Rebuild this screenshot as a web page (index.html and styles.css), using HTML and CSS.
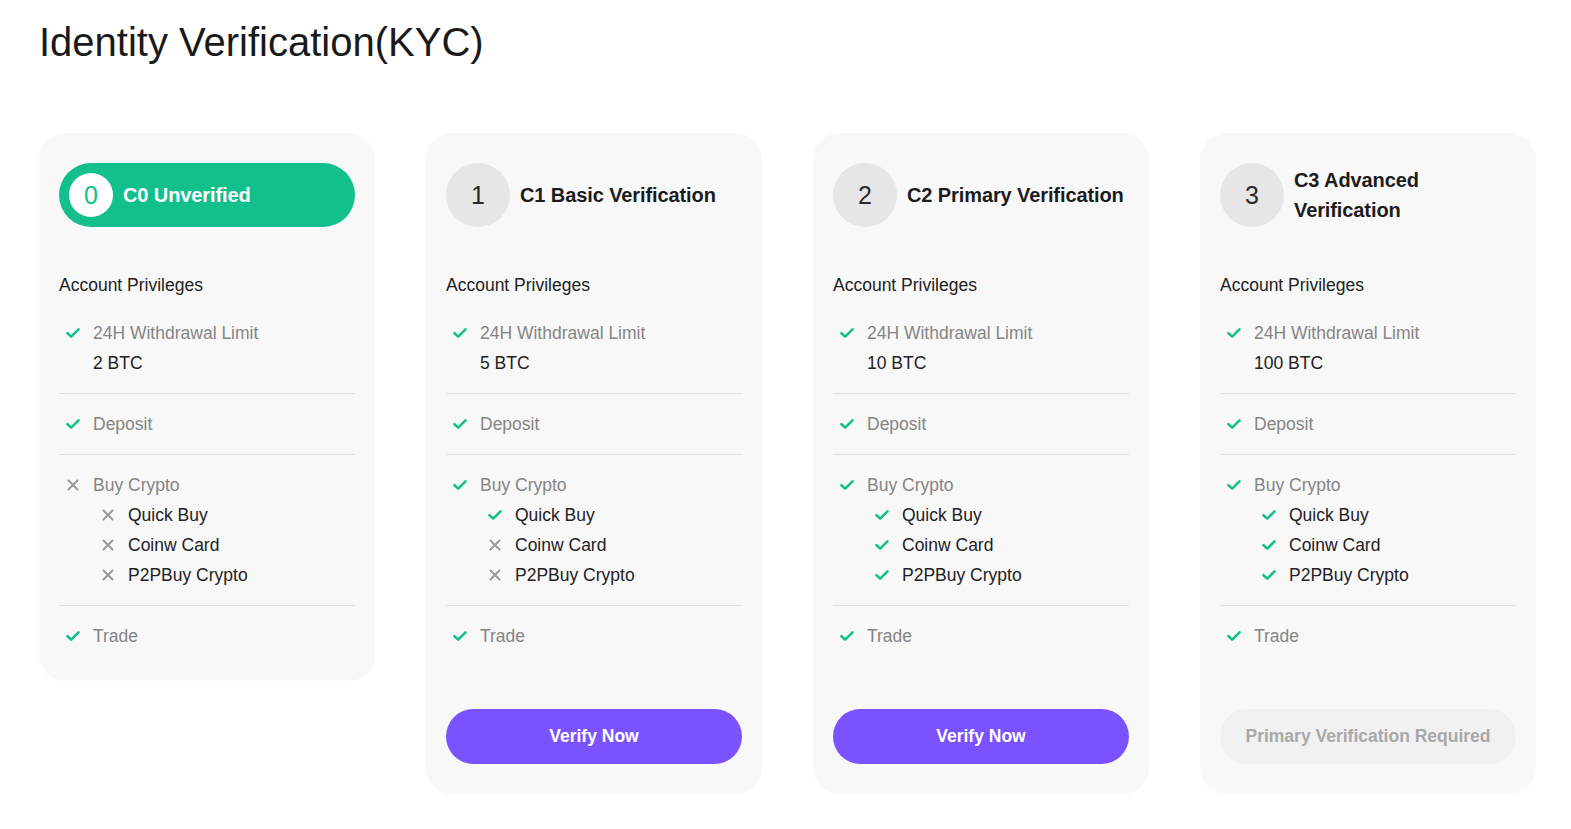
FILE: index.html
```html
<!DOCTYPE html>
<html>
<head>
<meta charset="utf-8">
<title>Identity Verification(KYC)</title>
<link rel="stylesheet" href="styles.css">
</head>
<body>
<div class="page">
  <h1 class="title">Identity Verification(KYC)</h1>
  <div class="cards">
    <!-- C0 -->
    <div class="card">
      <div class="head head-active">
        <div class="num num-active">0</div>
        <div class="head-text">C0 Unverified</div>
      </div>
      <div class="label">Account Privileges</div>
      <div class="sec">
        <div class="row"><span class="ic ok"><svg viewBox="0 0 14 14"><path d="M1.5 7.2 L5.2 10.6 L12.5 3.4"/></svg></span><span class="txt">24H Withdrawal Limit</span></div>
        <div class="row"><span class="ic"></span><span class="val">2 BTC</span></div>
      </div>
      <div class="sec">
        <div class="row"><span class="ic ok"><svg viewBox="0 0 14 14"><path d="M1.5 7.2 L5.2 10.6 L12.5 3.4"/></svg></span><span class="txt">Deposit</span></div>
      </div>
      <div class="sec">
        <div class="row"><span class="ic no"><svg viewBox="0 0 14 14"><path d="M2.5 2.5 L11.5 11.5 M11.5 2.5 L2.5 11.5"/></svg></span><span class="txt">Buy Crypto</span></div>
        <div class="row sub"><span class="ic no"><svg viewBox="0 0 14 14"><path d="M2.5 2.5 L11.5 11.5 M11.5 2.5 L2.5 11.5"/></svg></span><span class="val">Quick Buy</span></div>
        <div class="row sub"><span class="ic no"><svg viewBox="0 0 14 14"><path d="M2.5 2.5 L11.5 11.5 M11.5 2.5 L2.5 11.5"/></svg></span><span class="val">Coinw Card</span></div>
        <div class="row sub"><span class="ic no"><svg viewBox="0 0 14 14"><path d="M2.5 2.5 L11.5 11.5 M11.5 2.5 L2.5 11.5"/></svg></span><span class="val">P2PBuy Crypto</span></div>
      </div>
      <div class="sec last">
        <div class="row"><span class="ic ok"><svg viewBox="0 0 14 14"><path d="M1.5 7.2 L5.2 10.6 L12.5 3.4"/></svg></span><span class="txt">Trade</span></div>
      </div>
    </div>

    <!-- C1 -->
    <div class="card">
      <div class="head">
        <div class="num">1</div>
        <div class="head-text">C1 Basic Verification</div>
      </div>
      <div class="label">Account Privileges</div>
      <div class="sec">
        <div class="row"><span class="ic ok"><svg viewBox="0 0 14 14"><path d="M1.5 7.2 L5.2 10.6 L12.5 3.4"/></svg></span><span class="txt">24H Withdrawal Limit</span></div>
        <div class="row"><span class="ic"></span><span class="val">5 BTC</span></div>
      </div>
      <div class="sec">
        <div class="row"><span class="ic ok"><svg viewBox="0 0 14 14"><path d="M1.5 7.2 L5.2 10.6 L12.5 3.4"/></svg></span><span class="txt">Deposit</span></div>
      </div>
      <div class="sec">
        <div class="row"><span class="ic ok"><svg viewBox="0 0 14 14"><path d="M1.5 7.2 L5.2 10.6 L12.5 3.4"/></svg></span><span class="txt">Buy Crypto</span></div>
        <div class="row sub"><span class="ic ok"><svg viewBox="0 0 14 14"><path d="M1.5 7.2 L5.2 10.6 L12.5 3.4"/></svg></span><span class="val">Quick Buy</span></div>
        <div class="row sub"><span class="ic no"><svg viewBox="0 0 14 14"><path d="M2.5 2.5 L11.5 11.5 M11.5 2.5 L2.5 11.5"/></svg></span><span class="val">Coinw Card</span></div>
        <div class="row sub"><span class="ic no"><svg viewBox="0 0 14 14"><path d="M2.5 2.5 L11.5 11.5 M11.5 2.5 L2.5 11.5"/></svg></span><span class="val">P2PBuy Crypto</span></div>
      </div>
      <div class="sec last">
        <div class="row"><span class="ic ok"><svg viewBox="0 0 14 14"><path d="M1.5 7.2 L5.2 10.6 L12.5 3.4"/></svg></span><span class="txt">Trade</span></div>
      </div>
      <button class="btn">Verify Now</button>
    </div>

    <!-- C2 -->
    <div class="card">
      <div class="head">
        <div class="num">2</div>
        <div class="head-text">C2 Primary Verification</div>
      </div>
      <div class="label">Account Privileges</div>
      <div class="sec">
        <div class="row"><span class="ic ok"><svg viewBox="0 0 14 14"><path d="M1.5 7.2 L5.2 10.6 L12.5 3.4"/></svg></span><span class="txt">24H Withdrawal Limit</span></div>
        <div class="row"><span class="ic"></span><span class="val">10 BTC</span></div>
      </div>
      <div class="sec">
        <div class="row"><span class="ic ok"><svg viewBox="0 0 14 14"><path d="M1.5 7.2 L5.2 10.6 L12.5 3.4"/></svg></span><span class="txt">Deposit</span></div>
      </div>
      <div class="sec">
        <div class="row"><span class="ic ok"><svg viewBox="0 0 14 14"><path d="M1.5 7.2 L5.2 10.6 L12.5 3.4"/></svg></span><span class="txt">Buy Crypto</span></div>
        <div class="row sub"><span class="ic ok"><svg viewBox="0 0 14 14"><path d="M1.5 7.2 L5.2 10.6 L12.5 3.4"/></svg></span><span class="val">Quick Buy</span></div>
        <div class="row sub"><span class="ic ok"><svg viewBox="0 0 14 14"><path d="M1.5 7.2 L5.2 10.6 L12.5 3.4"/></svg></span><span class="val">Coinw Card</span></div>
        <div class="row sub"><span class="ic ok"><svg viewBox="0 0 14 14"><path d="M1.5 7.2 L5.2 10.6 L12.5 3.4"/></svg></span><span class="val">P2PBuy Crypto</span></div>
      </div>
      <div class="sec last">
        <div class="row"><span class="ic ok"><svg viewBox="0 0 14 14"><path d="M1.5 7.2 L5.2 10.6 L12.5 3.4"/></svg></span><span class="txt">Trade</span></div>
      </div>
      <button class="btn">Verify Now</button>
    </div>

    <!-- C3 -->
    <div class="card">
      <div class="head">
        <div class="num">3</div>
        <div class="head-text">C3 Advanced Verification</div>
      </div>
      <div class="label">Account Privileges</div>
      <div class="sec">
        <div class="row"><span class="ic ok"><svg viewBox="0 0 14 14"><path d="M1.5 7.2 L5.2 10.6 L12.5 3.4"/></svg></span><span class="txt">24H Withdrawal Limit</span></div>
        <div class="row"><span class="ic"></span><span class="val">100 BTC</span></div>
      </div>
      <div class="sec">
        <div class="row"><span class="ic ok"><svg viewBox="0 0 14 14"><path d="M1.5 7.2 L5.2 10.6 L12.5 3.4"/></svg></span><span class="txt">Deposit</span></div>
      </div>
      <div class="sec">
        <div class="row"><span class="ic ok"><svg viewBox="0 0 14 14"><path d="M1.5 7.2 L5.2 10.6 L12.5 3.4"/></svg></span><span class="txt">Buy Crypto</span></div>
        <div class="row sub"><span class="ic ok"><svg viewBox="0 0 14 14"><path d="M1.5 7.2 L5.2 10.6 L12.5 3.4"/></svg></span><span class="val">Quick Buy</span></div>
        <div class="row sub"><span class="ic ok"><svg viewBox="0 0 14 14"><path d="M1.5 7.2 L5.2 10.6 L12.5 3.4"/></svg></span><span class="val">Coinw Card</span></div>
        <div class="row sub"><span class="ic ok"><svg viewBox="0 0 14 14"><path d="M1.5 7.2 L5.2 10.6 L12.5 3.4"/></svg></span><span class="val">P2PBuy Crypto</span></div>
      </div>
      <div class="sec last">
        <div class="row"><span class="ic ok"><svg viewBox="0 0 14 14"><path d="M1.5 7.2 L5.2 10.6 L12.5 3.4"/></svg></span><span class="txt">Trade</span></div>
      </div>
      <button class="btn btn-disabled">Primary Verification Required</button>
    </div>
  </div>
</div>
</body>
</html>
```

FILE: styles.css
```css
* { box-sizing: border-box; }
html, body { margin: 0; padding: 0; background: #ffffff; }
body {
  font-family: "Liberation Sans", Arial, sans-serif;
  color: #222222;
}
.page {
  padding: 18px 0 0 39px;
}
.title {
  margin: 0;
  font-size: 40px;
  line-height: 48px;
  font-weight: 400;
  color: #1a1a1a;
}
.cards {
  margin-top: 67px;
  display: grid;
  grid-template-columns: repeat(4, 336px);
  column-gap: 51px;
  align-items: start;
}
.card {
  width: 336px;
  background: #f8f8f8;
  border-radius: 26px;
  padding: 30px 20px 30px;
  display: flex;
  flex-direction: column;
}
.head {
  height: 64px;
  display: flex;
  align-items: center;
  gap: 10px;
}
.head-active {
  background: #13c08b;
  border-radius: 32px;
  padding-left: 10px;
}
.num {
  flex: 0 0 64px;
  width: 64px;
  height: 64px;
  border-radius: 50%;
  background: #e6e6e6;
  color: #2a2a2a;
  font-size: 25px;
  display: flex;
  align-items: center;
  justify-content: center;
}
.num-active {
  flex: 0 0 44px;
  width: 44px;
  height: 44px;
  background: #ffffff;
  color: #13c08b;
}
.head-text {
  font-size: 20px;
  font-weight: 700;
  line-height: 30px;
  color: #1c1c1c;
  letter-spacing: -0.1px;
}
.head-active .head-text { color: #ffffff; }
.label {
  margin-top: 43px;
  margin-bottom: 3px;
  font-size: 17.5px;
  line-height: 30px;
  color: #222222;
}
.sec {
  padding: 15px 0;
  border-bottom: 1px solid #e2e2e2;
}
.sec.last {
  border-bottom: none;
  padding-bottom: 0;
}
.row {
  display: flex;
  align-items: center;
  height: 30px;
  font-size: 17.5px;
}
.row.sub { padding-left: 35px; }
.ic {
  width: 34px;
  flex: 0 0 34px;
  display: flex;
  align-items: center;
  padding-left: 7px;
}
.ic svg {
  width: 14px;
  height: 14px;
  fill: none;
  stroke-linecap: round;
  stroke-linejoin: round;
}
.ic.ok svg { stroke: #13c08b; stroke-width: 2.6; }
.ic.no svg { stroke: #999999; stroke-width: 2; width: 14px; height: 14px; }
.txt { color: #858585; }
.val { color: #222222; }
.btn {
  margin-top: 58px;
  height: 55px;
  border: none;
  border-radius: 28px;
  background: #7b52ff;
  color: #ffffff;
  font-family: "Liberation Sans", Arial, sans-serif;
  font-size: 17.5px;
  font-weight: 700;
  cursor: pointer;
  width: 100%;
}
.btn-disabled {
  background: #f1f1f1;
  color: #a8a8a8;
  cursor: default;
}
```
